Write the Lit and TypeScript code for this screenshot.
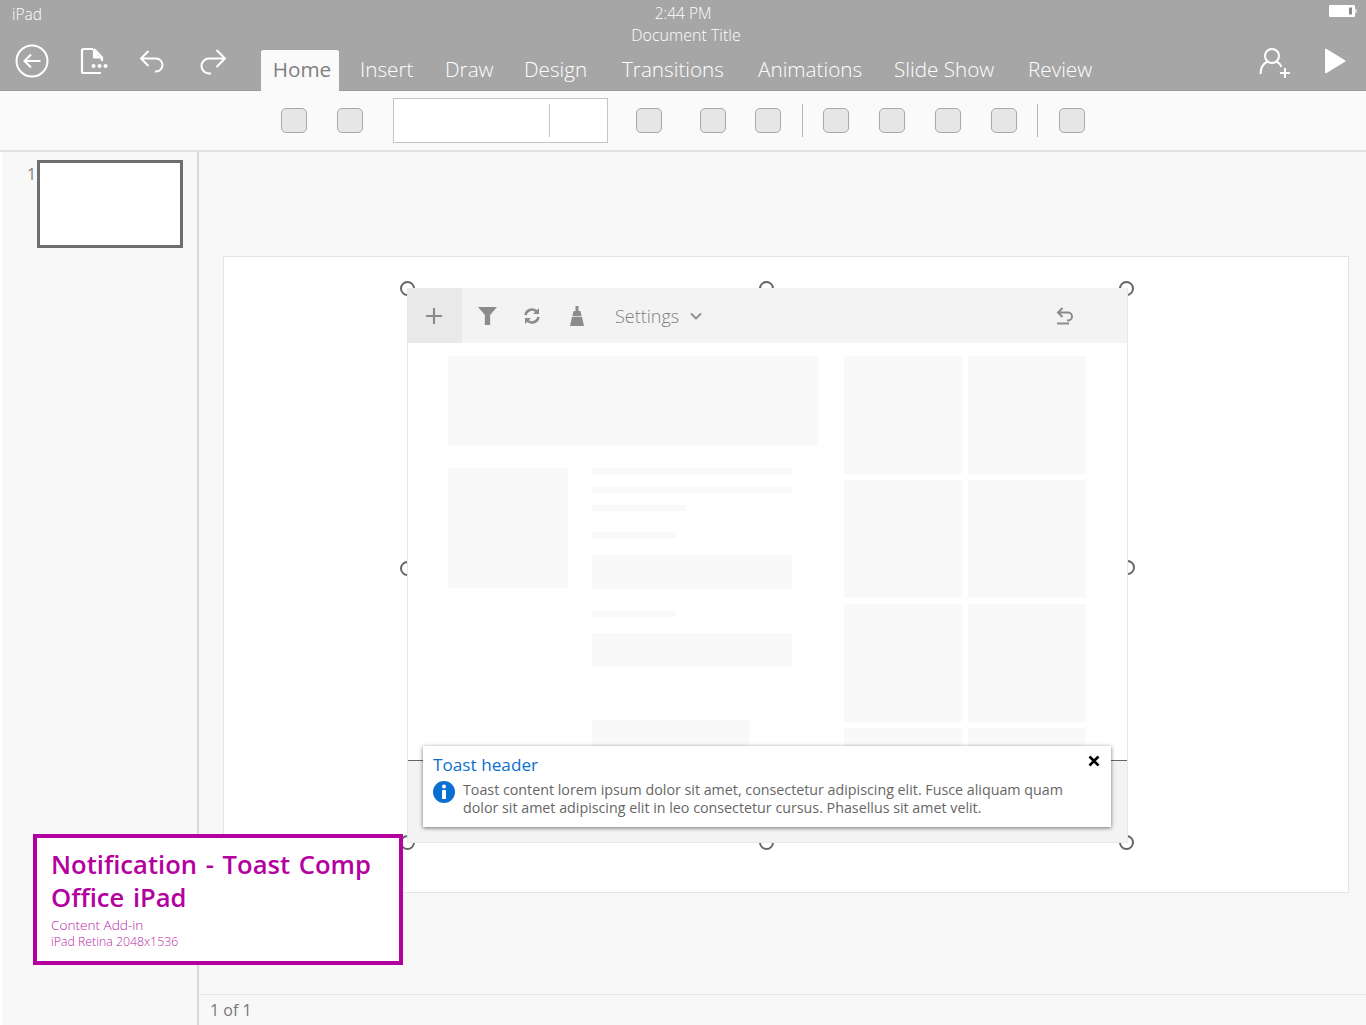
import {LitElement, html, css} from 'lit';
import {customElement} from 'lit/decorators.js';

const TABS = [
    {label: 'Insert', w: 85},
    {label: 'Draw', w: 79},
    {label: 'Design', w: 98},
    {label: 'Transitions', w: 136},
    {label: 'Animations', w: 136},
    {label: 'Slide Show', w: 134},
    {label: 'Review', w: 70},
];

@customElement('app-root')
class AppRoot extends LitElement {

    render() {
        return html`
            <div class="titlebar">
                <div class="status">
                    <span class="carrier">iPad</span>
                    <div class="doc"><span class="time">2:44 PM</span><span class="name">Document Title</span></div>
                    <svg class="battery" width="28" height="14" viewBox="0 0 28 14"><rect x="0" y="1" width="26" height="12" rx="1" fill="#fff"/><rect x="20" y="3.500" width="3" height="7" fill="#8a8a8a"/><rect x="26" y="5" width="1.500" height="4" fill="#e8e8e8"/></svg>
                </div>
                <div class="commands">
                    <svg class="ic-back" width="34" height="34" viewBox="0 0 34 34" fill="none" stroke="#fff" stroke-width="2"><circle cx="17" cy="17" r="15.500"/><path d="M25.500 17H9.500M16 10.500 9.500 17l6.500 6.500"/></svg>
                    <svg class="ic-file" width="28" height="28" viewBox="0 0 28 28" fill="none" stroke="#fff" stroke-width="2.200" stroke-linejoin="round"><path d="M13 2H3.500A1.500 1.500 0 0 0 2 3.500v21A1.500 1.500 0 0 0 3.500 26H21"/><path d="M14 2l8 8.500V14M14 2v8.500h8" fill="#fff"/><g fill="#fff" stroke="none"><circle cx="13.500" cy="19" r="2"/><circle cx="19.500" cy="19" r="2"/><circle cx="25.500" cy="19" r="2"/></g></svg>
                    <svg class="ic-undo" width="26" height="28" viewBox="0 0 26 28" fill="none" stroke="#fff" stroke-width="2"><path d="M9.500 3 2 10.500 9.500 18M2 10.500h15a6.500 6.500 0 0 1 0 13h-1"/></svg>
                    <svg class="ic-redo" width="28" height="28" viewBox="0 0 28 28" fill="none" stroke="#fff" stroke-width="2"><path d="M17.500 2 26 10.500 17.500 19M26 10.500H10a7.500 7.500 0 0 0 0 15h2"/></svg>
                    <nav class="tabs">
                        <span class="tab active">Home</span>
                        ${TABS.map(t => html`<span class="tab" style="width:${t.w}px">${t.label}</span>`)}
                    </nav>
                    <svg class="ic-user" width="32" height="32" viewBox="0 0 32 32" fill="none" stroke="#fff" stroke-width="2"><circle cx="13" cy="9" r="7"/><path d="M1.500 27c0-7 4-11 7-12.500M17.500 14.500c2 1 4 3 5 5.500"/><path d="M26 21v10M21 26h10"/></svg>
                    <svg class="ic-play" width="22" height="26" viewBox="0 0 22 26"><path d="M1 1.500v23a.8.8 0 0 0 1.200.7L21 13.700a.8.8 0 0 0 0-1.400L2.200.8A.8.8 0 0 0 1 1.500z" fill="#fff"/></svg>
                </div>
            </div>

            <div class="ribbon">
                <span class="btn b1"></span>
                <span class="btn b2"></span>
                <div class="combo"><span class="combo-sep"></span></div>
                <span class="btn b3"></span>
                <span class="btn b4"></span>
                <span class="btn b5"></span>
                <span class="sep s1"></span>
                <span class="btn b6"></span>
                <span class="btn b7"></span>
                <span class="btn b7"></span>
                <span class="btn b7"></span>
                <span class="sep s2"></span>
                <span class="btn b8"></span>
            </div>

            <div class="body">
                <aside class="sidebar">
                    <span class="num">1</span>
                    <div class="thumb"></div>
                </aside>
                <main class="work">
                    <div class="stage">
                        <section class="slide">
                            <div class="addin-wrap">
                                <div class="addin">
                                    <div class="bar">
                                        <span class="add"><svg width="18" height="18" viewBox="0 0 18 18" stroke="#8a8a8a" stroke-width="2.200"><path d="M9 1v16M1 9h16"/></svg></span>
                                        <svg class="ic-funnel" width="19" height="19" viewBox="0 0 18 18"><path d="M0 1h18l-6.500 7.500V18h-5V8.500z" fill="#8c8c8c"/></svg>
                                        <svg class="ic-sync" width="18" height="18" viewBox="0 0 18 18" fill="none" stroke="#8c8c8c" stroke-width="2.600"><path d="M2.500 8A6.500 6.500 0 0 1 13 4l2 2M15.500 10A6.500 6.500 0 0 1 5 14l-2-2"/><path d="M16 1v6h-6M2 17v-6h6" fill="#8c8c8c" stroke="none"/></svg>
                                        <svg class="ic-broom" width="16" height="20" viewBox="0 0 16 20"><path d="M6.500 0h3v5h-3zM4.500 5h7l1 5h-9zM3 10.800h10L15 20H1z" fill="#8c8c8c"/></svg>
                                        <span class="settings">Settings</span>
                                        <svg class="ic-chev" width="12" height="8" viewBox="0 0 12 8" fill="none" stroke="#8c8c8c" stroke-width="1.800"><path d="M1 1.500l5 5 5-5"/></svg>
                                        <svg class="ic-revert" width="18" height="18" viewBox="0 0 18 18" fill="none" stroke="#8c8c8c" stroke-width="2"><path d="M6.500 1 2 5.500 6.500 10M2 5.500h10a4 4 0 0 1 0 8h-1M1 16.500h12"/></svg>
                                    </div>
                                    <div class="content">
                                        <div class="left">
                                            <div class="ph banner"></div>
                                            <div class="detail">
                                                <div class="ph square"></div>
                                                <div class="lines">
                                                    <div class="ph line"></div>
                                                    <div class="ph line l2"></div>
                                                    <div class="ph line short l3"></div>
                                                    <div class="ph line shorter l4"></div>
                                                    <div class="ph field f1"></div>
                                                    <div class="ph line shorter l5"></div>
                                                    <div class="ph field f2"></div>
                                                    <div class="ph tail"></div>
                                                </div>
                                            </div>
                                        </div>
                                        <div class="tiles">
                                            ${Array.from({length: 8}, () => html`<div class="ph tile"></div>`)}
                                        </div>
                                    </div>
                                    <div class="footer"></div>
                                </div>
                                <span class="handle h-tl"></span>
                                <span class="handle h-tc"></span>
                                <span class="handle h-tr"></span>
                                <span class="handle h-ml"></span>
                                <span class="handle h-mr"></span>
                                <span class="handle h-bl"></span>
                                <span class="handle h-bc"></span>
                                <span class="handle h-br"></span>
                                <div class="toast">
                                    <div class="toast-title">Toast header</div>
                                    <div class="toast-row">
                                        <svg width="22" height="22" viewBox="0 0 22 22"><circle cx="11" cy="11" r="11" fill="#0a6fd2"/><circle cx="11" cy="5.500" r="2" fill="#fff"/><rect x="9" y="9" width="4" height="9" rx="0.500" fill="#fff"/></svg>
                                        <p>Toast content lorem ipsum dolor sit amet, consectetur adipiscing elit. Fusce aliquam quam dolor sit amet adipiscing elit in leo consectetur cursus. Phasellus sit amet velit.</p>
                                    </div>
                                    <svg class="close" width="12" height="12" viewBox="0 0 12 12" stroke="#000" stroke-width="2.600" fill="none"><path d="M1.500 1.500l9 9M10.500 1.500l-9 9"/></svg>
                                </div>
                            </div>
                        </section>
                    </div>
                    <footer class="pages">1 of 1</footer>
                </main>
                <div class="note">
                    <h1>Notification - Toast Comp<br>Office iPad</h1>
                    <p class="sub-a">Content Add-in</p>
                    <p class="sub-b">iPad Retina 2048x1536</p>
                </div>
            </div>
        `;
    }

    static styles = css`
        :host {
            display: block;
            width: 1366px;
            height: 1025px;
            overflow: hidden;
            font-family: "Open Sans", "Noto Sans", sans-serif;
            background: #fafafa;
        }

        * { box-sizing: border-box; }
        svg { display: block; flex: none; }

        .titlebar {
            height: 91px;
            background: #a6a6a6;
            color: #fff;
            border-bottom: 1px solid #9c9c9c;
        }

        .status {
            position: relative;
            height: 46px;
            padding: 3px 12px 0;
            font-weight: 300;
        }

        .carrier { line-height: 17px; font-size: 15.500px; }

        .doc {
            position: absolute;
            top: 3px;
            left: 0;
            width: 100%;
            padding-left: 6px;
            display: flex;
            flex-direction: column;
            align-items: center;
            font-size: 15.500px;
            line-height: 21px;
        }

        .name { font-size: 16px; margin-top: 1px; }
        .time { margin-left: -6px; }

        .battery { position: absolute; top: 4px; right: 9px; }

        .commands {
            display: flex;
            align-items: flex-start;
            height: 44px;
        }

        .ic-back { margin: -2px 0 0 15px; }
        .ic-file { margin: 1px 0 0 31px; }
        .ic-undo { margin: 2px 0 0 31px; }
        .ic-redo { margin: 2px 0 0 34px; }

        .tabs {
            display: flex;
            margin-left: 34px;
            height: 45px;
            font-size: 20.700px;
            font-weight: 300;
        }

        .tab { line-height: 38px; white-space: nowrap; margin-top: 4px; }

        .tab.active {
            width: 78px;
            margin: 4px 21px 0 0;
            padding-left: 4px;
            height: 41px;
            text-align: center;
            background: #fafafa;
            color: #808080;
            border-radius: 2px 2px 0 0;
            font-weight: 400;
        }

        .ic-user { margin: 1px 0 0 161px; }
        .ic-play { margin: 2px 0 0 33px; }

        .ribbon {
            display: flex;
            align-items: center;
            height: 61px;
            padding-left: 281px;
            background: #fafafa;
            border-bottom: 2px solid #e2e2e2;
        }

        .btn {
            width: 26px;
            height: 25px;
            background: #e6e6e6;
            border: 1px solid #a8a8a8;
            border-radius: 5px;
            flex: none;
        }

        .b2 { margin-left: 30px; }
        .b3 { margin-left: 28px; }
        .b4 { margin-left: 38px; }
        .b5 { margin-left: 29px; }
        .b6 { margin-left: 20px; }
        .b7 { margin-left: 30px; }
        .b8 { margin-left: 21px; }

        .combo {
            display: flex;
            align-items: center;
            width: 215px;
            height: 45px;
            margin-left: 30px;
            background: #fff;
            border: 1px solid #c4c4c4;
            padding-left: 155px;
        }

        .combo-sep { width: 1px; height: 33px; background: #c4c4c4; }

        .sep { width: 1px; height: 33px; background: #b4b4b4; flex: none; }
        .s1 { margin-left: 21px; }
        .s2 { margin-left: 20px; }

        .body {
            position: relative;
            display: flex;
            height: 873px;
        }

        .sidebar {
            position: relative;
            width: 199px;
            padding: 8px 0 0 35px;
            background: #f8f8f8;
            border-left: 2px solid #fff;
            border-right: 2px solid #d8d8d8;
        }

        .num {
            position: absolute;
            top: 13px;
            left: 25px;
            font-size: 16px;
            line-height: 18px;
            color: #808080;
        }

        .thumb {
            width: 146px;
            height: 88px;
            background: #fff;
            border: 3px solid #6e6e6e;
        }

        .work {
            flex: 1;
            display: flex;
            flex-direction: column;
            min-width: 0;
            background: #f8f8f8;
        }

        .stage { flex: 1; padding: 104px 17px 0 24px; }

        .slide {
            position: relative;
            z-index: 0;
            height: 637px;
            padding: 31px 0 0 183px;
            background: #fff;
            border: 1px solid #e4e4e4;
        }

        .addin-wrap { position: relative; width: 721px; height: 555px; }

        .addin {
            display: flex;
            flex-direction: column;
            height: 100%;
            background: #fff;
            border: 1px solid #e8e8e8;
            border-top: 0;
            overflow: hidden;
        }

        .bar {
            display: flex;
            align-items: center;
            height: 55px;
            flex: none;
            background: #f3f3f3;
        }

        .add {
            display: flex;
            align-items: center;
            justify-content: center;
            width: 54px;
            height: 100%;
            padding-right: 2px;
            background: #e9e9e9;
        }

        .ic-funnel { margin-left: 16px; }
        .ic-sync { margin-left: 26px; }
        .ic-broom { margin-left: 28px; }

        .settings {
            margin-left: 30px;
            font-size: 18px;
            font-weight: 300;
            color: #808080;
        }

        .ic-chev { margin-left: 11px; }
        .ic-revert { margin-left: 354px; }

        .content {
            display: flex;
            height: 417px;
            flex: none;
            padding: 13px 0 0 40px;
            overflow: hidden;
        }

        .ph { background: #f9f9f9; }

        .left { width: 370px; }
        .banner { height: 90px; }

        .detail { display: flex; margin-top: 22px; }
        .square { width: 120px; height: 120px; }

        .lines { width: 200px; margin-left: 24px; }
        .line { height: 6px; }
        .l2 { margin-top: 13px; }
        .l3 { margin-top: 12px; }
        .l4 { margin-top: 21px; }
        .short { width: 94px; }
        .shorter { width: 84px; }
        .field { height: 34px; }
        .f1 { margin-top: 17px; }
        .l5 { margin-top: 22px; }
        .f2 { margin-top: 16px; }
        .tail { width: 158px; height: 40px; margin-top: 53px; }

        .tiles {
            display: grid;
            grid-template-columns: 118px 118px;
            grid-auto-rows: 118px;
            column-gap: 6px;
            row-gap: 6px;
            margin-left: 26px;
        }

        .footer {
            flex: 1;
            background: #f3f3f3;
            border-top: 1px solid #666;
        }

        .handle {
            position: absolute;
            width: 15px;
            height: 15px;
            border: 2px solid #666;
            border-radius: 50%;
            background: #fff;
            z-index: -1;
        }

        .h-tl { left: -7px; top: -7px; }
        .h-tc { left: 352px; top: -7px; }
        .h-tr { left: 712px; top: -7px; }
        .h-ml { left: -7px; top: 273px; }
        .h-mr { left: 713px; top: 272px; }
        .h-bl { left: -7px; top: 547px; }
        .h-bc { left: 352px; top: 547px; }
        .h-br { left: 712px; top: 547px; }

        .toast {
            position: absolute;
            left: 16px;
            top: 458px;
            width: 688px;
            height: 81px;
            padding: 7px 10px;
            background: #fff;
            box-shadow: 0 1px 4px rgba(0, 0, 0, 0.55);
        }

        .toast-title {
            font-size: 17.200px;
            line-height: 24px;
            color: #0a6fd2;
        }

        .toast-row {
            display: flex;
            gap: 8px;
            margin-top: 4px;
        }

        .toast-row p {
            margin: 0;
            width: 625px;
            font-size: 14.270px;
            line-height: 18px;
            color: #666;
        }

        .close { position: absolute; top: 9px; right: 11px; }

        .pages {
            height: 31px;
            padding-left: 11px;
            flex: none;
            font-size: 16px;
            line-height: 30px;
            color: #777;
            border-top: 1px solid #e6e6e6;
        }

        .note {
            position: absolute;
            left: 33px;
            top: 682px;
            width: 370px;
            height: 131px;
            padding: 10px 0 0 14px;
            background: #fff;
            border: 4px solid #b4009e;
            color: #b4009e;
        }

        .note h1 {
            margin: 0;
            font-size: 25.600px;
            line-height: 33px;
            font-weight: 600;
            word-spacing: 2px;
            white-space: nowrap;
        }

        .note p {
            margin: 0;
            line-height: 17px;
            font-weight: 300;
            color: #b81fa6;
        }

        .sub-a { margin-top: 2px !important; font-size: 13.600px; }
        .sub-b { font-size: 12.300px; }
    `;
}
